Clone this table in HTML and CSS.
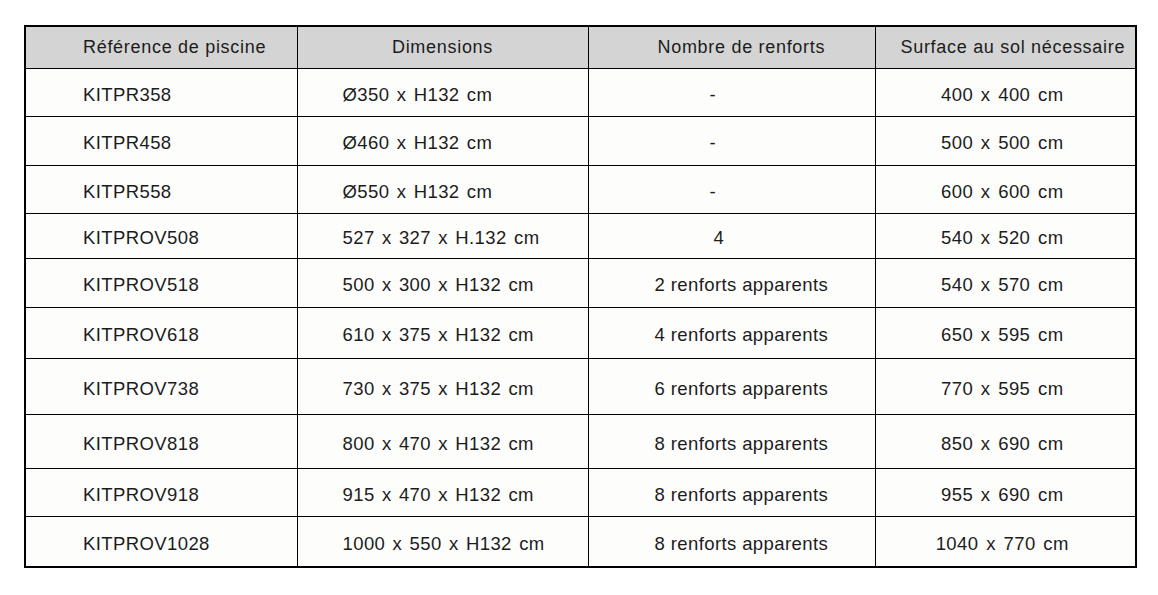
FILE: index.html
```html
<!DOCTYPE html>
<html lang="fr">
<head>
<meta charset="utf-8">
<title>Tableau des piscines</title>
<link rel="stylesheet" href="styles.css">
</head>
<body>
<main class="page">
<table class="specs">
  <colgroup>
    <col class="w1"><col class="w2"><col class="w3"><col class="w4">
  </colgroup>
  <thead>
    <tr class="r-head">
      <th class="c1">Référence de piscine</th>
      <th class="c2 h2">Dimensions</th>
      <th class="c3 h3">Nombre de renforts</th>
      <th class="c4 h4">Surface au sol nécessaire</th>
    </tr>
  </thead>
  <tbody>
    <tr class="r48"><td class="c1">KITPR358</td><td class="c2">Ø350 x H132 cm</td><td class="c3 short">-</td><td class="c4">400 x 400 cm</td></tr>
    <tr class="r49"><td class="c1">KITPR458</td><td class="c2">Ø460 x H132 cm</td><td class="c3 short">-</td><td class="c4">500 x 500 cm</td></tr>
    <tr class="r48"><td class="c1">KITPR558</td><td class="c2">Ø550 x H132 cm</td><td class="c3 short">-</td><td class="c4">600 x 600 cm</td></tr>
    <tr class="r45"><td class="c1">KITPROV508</td><td class="c2">527 x 327 x H.132 cm</td><td class="c3 short four">4</td><td class="c4">540 x 520 cm</td></tr>
    <tr class="r49"><td class="c1">KITPROV518</td><td class="c2">500 x 300 x H132 cm</td><td class="c3">2 renforts apparents</td><td class="c4">540 x 570 cm</td></tr>
    <tr class="r51"><td class="c1">KITPROV618</td><td class="c2">610 x 375 x H132 cm</td><td class="c3">4 renforts apparents</td><td class="c4">650 x 595 cm</td></tr>
    <tr class="r56"><td class="c1">KITPROV738</td><td class="c2">730 x 375 x H132 cm</td><td class="c3">6 renforts apparents</td><td class="c4">770 x 595 cm</td></tr>
    <tr class="r54"><td class="c1">KITPROV818</td><td class="c2">800 x 470 x H132 cm</td><td class="c3">8 renforts apparents</td><td class="c4">850 x 690 cm</td></tr>
    <tr class="r48"><td class="c1">KITPROV918</td><td class="c2">915 x 470 x H132 cm</td><td class="c3">8 renforts apparents</td><td class="c4">955 x 690 cm</td></tr>
    <tr class="r51"><td class="c1">KITPROV1028</td><td class="c2">1000 x 550 x H132 cm</td><td class="c3">8 renforts apparents</td><td class="c4">1040 x 770 cm</td></tr>
  </tbody>
</table>
</main>
</body>
</html>
```

FILE: styles.css
```css
html, body {
  margin: 0;
  padding: 0;
  background: #ffffff;
}

.page {
  padding: 25px 0 0 24px;
}

.specs {
  border-collapse: collapse;
  table-layout: fixed;
  width: 1111px;
  border: 2px solid #000;
  font-family: "Liberation Sans", Arial, sans-serif;
  font-size: 18.5px;
  letter-spacing: 0.4px;
  color: #1c1c1c;
  background: #fdfdfc;
}

.w1 { width: 272px; }
.w2 { width: 291px; }
.w3 { width: 287px; }
.w4 { width: 261px; }

.specs th,
.specs td {
  border: 1px solid #000;
  padding: 5px 0 0 0;
  vertical-align: middle;
  white-space: nowrap;
  overflow: hidden;
  text-align: left;
}

.specs th {
  font-weight: normal;
  font-size: 18px;
  letter-spacing: 0.7px;
  padding: 0;
  background: #d4d4d4;
}

.r-head { height: 42px; }
.r45 { height: 45px; }
.r48 { height: 48px; }
.r49 { height: 49px; }
.r51 { height: 51px; }
.r54 { height: 54px; }
.r56 { height: 56px; }

.specs .c1 { padding-left: 57px; }
.specs .c2 { padding-left: 45px; word-spacing: 1.8px; }
.specs .c3 { padding-left: 66px; }
.specs .c4 { text-align: center; padding-right: 6px; word-spacing: 2.2px; }

.specs .h2 { text-align: center; padding-left: 0; word-spacing: 0; }
.specs .h3 { padding-left: 69px; }
.specs .h4 { text-align: left; padding-left: 25px; padding-right: 0; word-spacing: 0; }

.specs .short { padding-left: 121px; }
.specs .four { padding-left: 125px; }
```
